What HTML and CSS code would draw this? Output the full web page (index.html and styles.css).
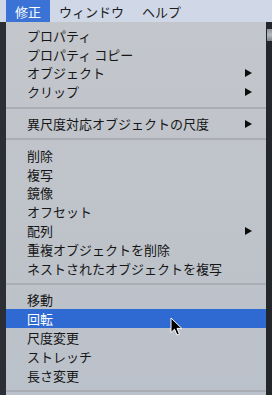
FILE: index.html
```html
<!DOCTYPE html>
<html lang="ja">
<head>
<meta charset="utf-8">
<link rel="stylesheet" href="styles.css">
</head>
<body>
<div class="screen">
  <div class="menubar">
    <span class="title active">修正</span>
    <span class="title">ウィンドウ</span>
    <span class="title">ヘルプ</span>
  </div>
  <div class="main">
    <div class="edge edge-left"></div>
    <div class="menu">
      <div class="item">プロパティ</div>
      <div class="item">プロパティ コピー</div>
      <div class="item">オブジェクト<span class="arrow"></span></div>
      <div class="item">クリップ<span class="arrow"></span></div>
      <div class="sep"></div>
      <div class="item">異尺度対応オブジェクトの尺度<span class="arrow"></span></div>
      <div class="sep"></div>
      <div class="item">削除</div>
      <div class="item">複写</div>
      <div class="item">鏡像</div>
      <div class="item">オフセット</div>
      <div class="item">配列<span class="arrow"></span></div>
      <div class="item">重複オブジェクトを削除</div>
      <div class="item">ネストされたオブジェクトを複写</div>
      <div class="sep"></div>
      <div class="item">移動</div>
      <div class="item selected">回転</div>
      <div class="item">尺度変更</div>
      <div class="item">ストレッチ</div>
      <div class="item">長さ変更</div>
      <div class="sep"></div>
    </div>
    <div class="edge edge-right">
      <div class="win-bit"></div>
    </div>
  </div>
  <svg class="cursor" width="14" height="20" viewBox="0 0 14 20">
    <path d="M1 1 L1 15.5 L4.5 12.2 L7 18 L9.4 17 L7 11.4 L11.8 11.4 Z" fill="#000" stroke="#fff" stroke-width="1" stroke-linejoin="miter"/>
  </svg>
</div>
</body>
</html>
```

FILE: styles.css
```css
* { box-sizing: border-box; }
html, body {
  margin: 0;
  padding: 0;
  width: 272px;
  height: 395px;
  overflow: hidden;
  background: #2a2e34;
}
.screen {
  position: relative;
  width: 272px;
  height: 395px;
  display: flex;
  flex-direction: column;
  font-family: "Noto Sans CJK JP", "Noto Sans", sans-serif;
  font-size: 13px;
  color: #161616;
}
.menubar {
  height: 22px;
  flex: none;
  display: flex;
  align-items: stretch;
  padding-left: 6px;
  background: #d0d7e6;
}
.title {
  display: flex;
  align-items: center;
  padding: 0 9px;
  line-height: 1;
  color: #1b1c1e;
}
.title.active {
  background: #3a73d5;
  color: #fff;
}
.main {
  flex: 1;
  display: flex;
  min-height: 0;
}
.edge {
  flex: none;
  width: 6px;
  background: #2b2f35;
}
.edge-right {
  background: #23262b;
  padding-top: 7px;
}
.win-bit {
  height: 12px;
  margin-left: 1px;
  background: linear-gradient(#8f969c, #b3b8bc 50%, #7d848a);
}
.menu {
  flex: 1;
  padding-top: 4px;
  background: linear-gradient(#c3c6cb, #bec3ca 60%, #bbc1ca);
  overflow: hidden;
}
.item {
  height: 18.8px;
  display: flex;
  align-items: center;
  justify-content: space-between;
  padding: 0 14px 0 21px;
  line-height: 1;
  white-space: nowrap;
}
.item.selected {
  background: #2e6ad2;
  color: #fff;
}
.arrow {
  width: 0;
  height: 0;
  border-left: 7px solid #0c0c0c;
  border-top: 4px solid transparent;
  border-bottom: 4px solid transparent;
}
.sep {
  height: 2px;
  margin: 5.5px 0;
  background: #aaaeb4;
}
.cursor {
  position: absolute;
  left: 170px;
  top: 317px;
}
```
